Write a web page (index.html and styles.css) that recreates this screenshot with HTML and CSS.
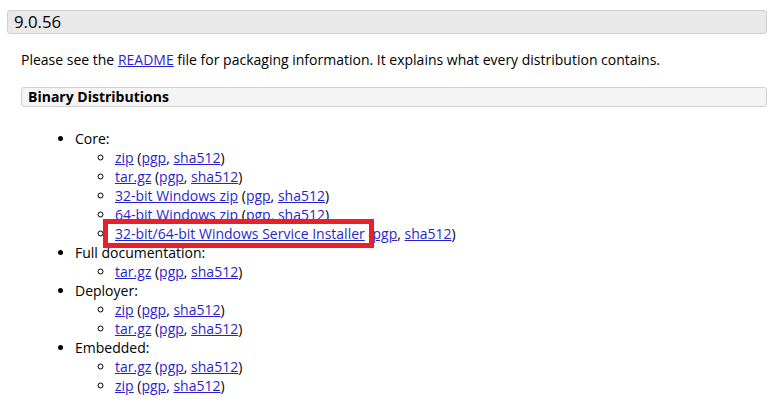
FILE: index.html
```html
<!DOCTYPE html>
<html>
<head>
<meta charset="utf-8">
<link rel="stylesheet" href="styles.css">
</head>
<body>
<div class="page">
  <h3 class="version">9.0.56</h3>
  <div class="section">
    <p class="intro">Please see the <a href="#">README</a> file for packaging information. It explains what every distribution contains.</p>
    <h4 class="subhead">Binary Distributions</h4>
    <ul class="dist">
      <li>Core:
        <ul>
          <li><a href="#">zip</a> (<a href="#">pgp</a>, <a href="#">sha512</a>)</li>
          <li><a href="#">tar.gz</a> (<a href="#">pgp</a>, <a href="#">sha512</a>)</li>
          <li><a href="#">32-bit Windows zip</a> (<a href="#">pgp</a>, <a href="#">sha512</a>)</li>
          <li><a href="#">64-bit Windows zip</a> (<a href="#">pgp</a>, <a href="#">sha512</a>)</li>
          <li><span class="highlight"><a href="#">32-bit/64-bit Windows Service Installer</a></span> (<a href="#">pgp</a>, <a href="#">sha512</a>)</li>
        </ul>
      </li>
      <li>Full documentation:
        <ul>
          <li><a href="#">tar.gz</a> (<a href="#">pgp</a>, <a href="#">sha512</a>)</li>
        </ul>
      </li>
      <li>Deployer:
        <ul>
          <li><a href="#">zip</a> (<a href="#">pgp</a>, <a href="#">sha512</a>)</li>
          <li><a href="#">tar.gz</a> (<a href="#">pgp</a>, <a href="#">sha512</a>)</li>
        </ul>
      </li>
      <li>Embedded:
        <ul>
          <li><a href="#">tar.gz</a> (<a href="#">pgp</a>, <a href="#">sha512</a>)</li>
          <li><a href="#">zip</a> (<a href="#">pgp</a>, <a href="#">sha512</a>)</li>
        </ul>
      </li>
    </ul>
  </div>
</div>
</body>
</html>
```
FILE: styles.css
```css
html, body {
  margin: 0;
  padding: 0;
  background: #fff;
}
body {
  font-family: "Open Sans", "Liberation Sans", sans-serif;
  font-size: 14px;
  line-height: 19px;
  color: #000;
}
.page {
  padding: 10px 7px 0 7px;
}
.version {
  margin: 0;
  font-size: 16.8px;
  font-weight: normal;
  line-height: 22px;
  padding: 0 6px;
  background: #e9e9e9;
  border: 1px solid #cfcfcf;
  border-radius: 3px;
}
.section {
  padding-left: 14px;
}
.intro {
  margin: 16px 0 18px 0;
}
a {
  color: #2a1fd0;
  text-decoration: underline;
}
.subhead {
  margin: 0;
  font-size: 14px;
  font-weight: bold;
  line-height: 18px;
  padding: 0 6px;
  background: #f4f4f4;
  border: 1px solid #cfcfcf;
  border-radius: 3px;
}
.dist {
  margin: 21.5px 0 0 0;
  padding-left: 54px;
  list-style: disc;
}
.dist ul {
  margin: 0;
  padding-left: 40px;
  list-style: circle;
}
.highlight {
  position: relative;
}
.highlight::after {
  content: "";
  position: absolute;
  left: -12px;
  right: -9px;
  top: -5px;
  bottom: -5px;
  border: 5px solid #e8202a;
  pointer-events: none;
}
```
